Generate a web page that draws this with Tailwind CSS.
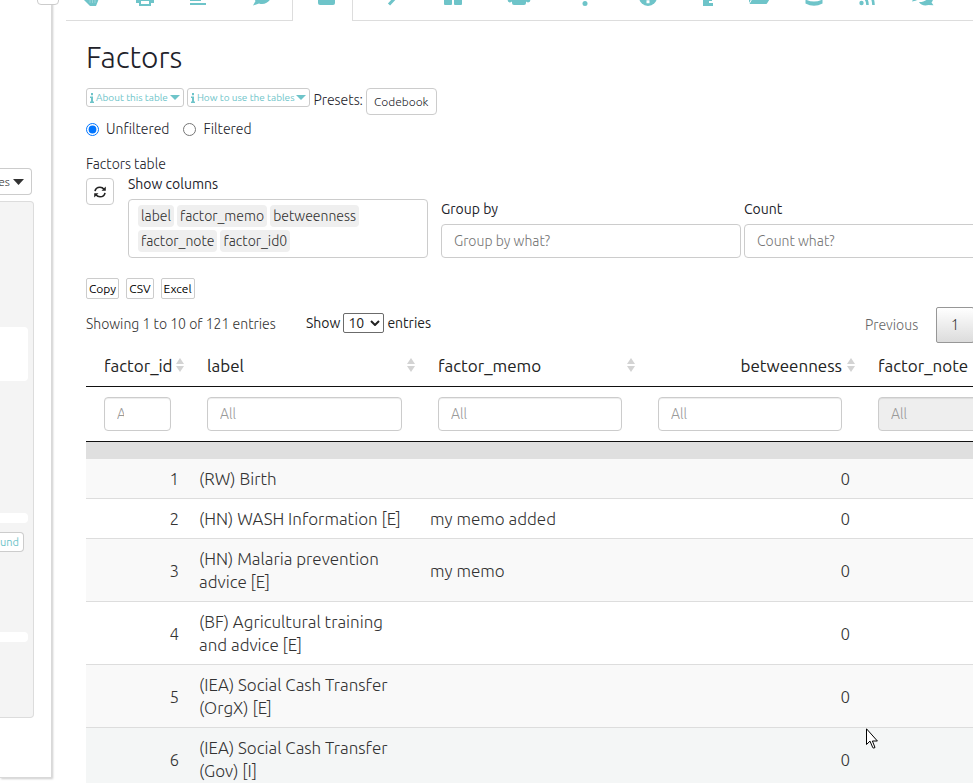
<!DOCTYPE html>
<html lang="en">
<head>
<meta charset="utf-8">
<meta name="viewport" content="width=device-width, initial-scale=1">
<title>Factors</title>
<script src="https://cdn.jsdelivr.net/npm/@tailwindcss/browser@4"></script>
</head>
<body class="relative flex min-h-screen overflow-hidden bg-white font-['Ubuntu','Open_Sans',sans-serif] text-[14px] leading-5 font-light text-[#212129]">

<!-- Sidebar -->
<aside class="relative h-[778px] w-[52px] shrink-0 border-r border-b border-[#d9d9d9] shadow-[1px_1px_2px_#ccc]" aria-label="Options">
  <button aria-label="Collapse" class="absolute -right-2 -top-4 h-[21px] w-[22px] rounded border border-[#ccc] bg-white"></button>
  <div class="flex flex-col items-start pt-[168px]">
    <button class="flex h-[27px] w-8 items-center justify-end gap-[3px] rounded-r border border-l-0 border-[#ccc] pr-[7px] text-[12px] text-[#333]">es
      <svg class="h-[6px] w-[11px] shrink-0" viewBox="0 0 11 6"><path d="M0 0h11L5.500 6z" fill="#333"/></svg>
    </button>
    <div class="mt-[6px] h-[517px] w-[34px] rounded-r border border-l-0 border-[#dcdcdc] bg-[#f4f4f4]">
      <div class="mt-[125px] h-[54px] w-7 rounded-r bg-white"></div>
      <div class="mt-[132px] h-[10px] w-7 rounded-r bg-white"></div>
      <button class="mt-[9px] flex h-5 w-6 items-center justify-end rounded-r border border-l-0 border-[#ccc] bg-white pr-1 text-[11px] font-normal text-[#6ec4c9]">und</button>
      <div class="mt-[80px] h-[10px] w-7 rounded-r bg-white"></div>
    </div>
  </div>
</aside>

<main class="ml-[14px] min-w-0 flex-1">
  <!-- Tabs -->
  <nav class="flex h-[21px] overflow-hidden text-[#6ec4c9] *:flex *:h-[21px] *:shrink-0 *:justify-center *:border-b *:border-[#ddd]" aria-label="Sections">
    <a href="#" aria-label="Hand" class="w-[52px]"><svg class="-mt-[12px] h-[18px] w-5" viewBox="0 0 20 18" fill="currentColor"><path d="M1 3h17v4l-2 6-2 5H8l-6-6z"/><path d="M8 12v3M10.500 12v3M13 12v3" stroke="#fff" stroke-opacity=".3"/></svg></a>
    <a href="#" aria-label="Print" class="w-[53px]"><svg class="-mt-[12px] h-[18px] w-5" viewBox="0 0 20 18" fill="currentColor"><path fill-rule="evenodd" d="M4 1h12v6h2q1 0 1 1v7h-3v3H4v-3H1V8q0-1 1-1h2zM6 3v5h8V3zM6 13v3h8v-3z"/></svg></a>
    <a href="#" aria-label="Text" class="w-[54px]"><svg class="-mt-[12px] h-[18px] w-5" viewBox="0 0 20 18" fill="currentColor"><path d="M2 3h14v2H2zM2 7h11v2H2zM2 11h11v2H2zM2 15h16v2H2z"/></svg></a>
    <a href="#" aria-label="Comment" class="w-[67px] pl-[6px]"><svg class="-mt-[12px] h-[18px] w-5" viewBox="0 0 20 18" fill="currentColor"><path d="M10 2c5 0 9 3 9 6.500S15 16 10 16c-1 0-2 0-3-.5L1 17.500l2.500-4.500C0 8 3 2 10 2z"/></svg></a>
    <a href="#" aria-label="Factors" aria-current="page" class="w-[61px] border-x !border-b-0 pl-[6px]"><svg class="-mt-[12px] h-[18px] w-5" viewBox="0 0 20 18" fill="currentColor"><rect x="2" y="1" width="17" height="16" rx="2"/></svg></a>
    <a href="#" aria-label="Links" class="w-[79px]"><svg class="-mt-[12px] h-[18px] w-5" viewBox="0 0 20 18"><path d="M6 2l7 7-7 7.500" fill="none" stroke="currentColor" stroke-width="3"/></svg></a>
    <a href="#" aria-label="Grid" class="w-[42px]"><svg class="-mt-[12px] h-[18px] w-5" viewBox="0 0 20 18" fill="currentColor"><rect x="1" width="8" height="8" rx="1"/><rect x="11" width="8" height="8" rx="1"/><rect x="1" y="9" width="8" height="8" rx="1"/><rect x="11" y="9" width="8" height="8" rx="1"/></svg></a>
    <a href="#" aria-label="Users" class="w-[90px]"><svg class="-mt-[12px] h-[18px] w-6" viewBox="0 0 24 18" fill="currentColor"><circle cx="12" cy="5" r="4"/><path d="M5 15v-2q0-4 4-4h6q4 0 4 4v2q0 2-2 2H7q-2 0-2-2z"/><circle cx="3" cy="12" r="2.400"/><circle cx="21" cy="12" r="2.400"/></svg></a>
    <a href="#" aria-label="Alerts" class="w-[42px]"><svg class="-mt-[12px] h-[18px] w-5" viewBox="0 0 20 18" fill="currentColor"><path d="M8 0h4l-1 10H9z"/><circle cx="10" cy="15.500" r="2.500"/></svg></a>
    <a href="#" aria-label="Help" class="w-[84px]"><svg class="-mt-[12px] h-[18px] w-5" viewBox="0 0 20 18" fill="currentColor"><circle cx="10" cy="9" r="9"/><path d="M8.700 4h2.600v6H8.700zM8.500 12.200h3v3h-3z" fill="#fff"/></svg></a>
    <a href="#" aria-label="Document" class="w-9"><svg class="-mt-[12px] h-[18px] w-5" viewBox="0 0 20 18"><path d="M5 1h10v3h-1v9h-3v2h4v3H5z" fill="currentColor"/></svg></a>
    <a href="#" aria-label="Folder" class="w-[68px]"><svg class="-mt-[12px] h-[18px] w-6" viewBox="0 0 24 18" fill="currentColor"><path d="M1 3h7l2 2h9v3H5l-4 7zM5.500 9H23l-4 6.500q-.5.500-1.500.5H1.500z"/></svg></a>
    <a href="#" aria-label="Database" class="w-10"><svg class="-mt-[12px] h-[18px] w-5" viewBox="0 0 20 18" fill="currentColor"><ellipse cx="10" cy="3" rx="8.500" ry="3"/><path d="M1.500 5q8.500 4 17 0v4q-8.500 4-17 0zM1.500 11.500q8.500 4 17 0v4q-8.500 4.500-17 0z"/></svg></a>
    <a href="#" aria-label="Feed" class="w-[66px]"><svg class="-mt-[12px] h-[18px] w-5" viewBox="0 0 20 18"><circle cx="4.500" cy="15" r="2.200" fill="currentColor"/><path d="M2 8.500q8.500 0 8.500 8.500M2 3q14 0 14.500 14" fill="none" stroke="currentColor" stroke-width="2.600"/></svg></a>
    <a href="#" aria-label="Discussion" class="w-[46px]"><svg class="-mt-[12px] h-[18px] w-6" viewBox="0 0 24 18" fill="currentColor"><path d="M9 1c5 0 8 3 8 5.500S14 12 9 12c-2 0-3 0-4.500.8L1 13.500l1.500-3C-1 6 3 1 9 1z"/><path d="M18.500 6c4 2 4.500 6 2 8.500l2 2.800-5-.3c-4 1.200-8 0-9.500-3 6 .2 10-2.800 10.500-8z"/></svg></a>
    <span class="min-w-0 flex-1"></span>
  </nav>

  <div class="pl-5">
    <h1 class="mt-[19px] text-[30px] leading-[34px]">Factors</h1>

    <div class="mt-[14px] flex gap-[3px]">
      <button class="flex h-[19px] items-center gap-[2px] rounded-[3px] border border-[#ccc] px-[3px] text-[10px] font-normal text-[#6ec4c9]">
        <svg class="h-[10px] w-1" viewBox="0 0 4 10" fill="currentColor"><path d="M1 0h2v2.200H1zM0 3.500h3V8.500h1V10H0V8.500h1V5H0z"/></svg>
        <span>About this table</span>
        <svg class="h-[5px] w-[10px]" viewBox="0 0 10 5" fill="currentColor"><path d="M0 0h10L5 5z"/></svg>
      </button>
      <button class="flex h-[19px] items-center gap-[2px] rounded-[3px] border border-[#ccc] px-[3px] text-[10px] font-normal text-[#6ec4c9]">
        <svg class="h-[10px] w-1" viewBox="0 0 4 10" fill="currentColor"><path d="M1 0h2v2.200H1zM0 3.500h3V8.500h1V10H0V8.500h1V5H0z"/></svg>
        <span>How to use the tables</span>
        <svg class="h-[5px] w-[10px]" viewBox="0 0 10 5" fill="currentColor"><path d="M0 0h10L5 5z"/></svg>
      </button>
      <span class="pt-[2px]">Presets:</span>
      <button class="h-[27px] rounded border border-[#ccc] px-[7px] text-[12px]">Codebook</button>
    </div>

    <div class="mt-1 flex h-5 items-center">
      <label class="flex items-center gap-[7px]"><input type="radio" name="filter" checked class="size-[13px]">Unfiltered</label>
      <label class="ml-[14px] flex items-center gap-[7px]"><input type="radio" name="filter" class="size-[13px]">Filtered</label>
    </div>

    <h2 class="mt-[15px]">Factors table</h2>

    <div class="flex items-start">
      <button aria-label="Refresh" class="mt-1 flex h-[27px] w-7 shrink-0 items-center justify-center rounded border border-[#ccc]">
        <svg class="size-3" viewBox="0 0 12 12" fill="none" stroke="#222" stroke-width="1.600"><path d="M1 5.200C1.500 2.500 3.800 1.200 6 1.200c1.700 0 3 .7 4 2M11 6.800c-.5 2.700-2.800 4-5 4-1.700 0-3-.7-4-2"/><path d="M11.800.5v4.300H7.500zM.2 11.500V7.200h4.300z" fill="#222" stroke="none"/></svg>
      </button>
      <div class="ml-[14px] w-[300px] shrink-0">
        <div id="cols" class="font-normal">Show columns</div>
        <div role="group" aria-labelledby="cols" class="mt-[5px] flex h-[59px] flex-wrap content-start gap-[3px] rounded border border-[#ccc] py-[5px] pl-[9px] text-[#303030] *:h-[22px] *:rounded *:bg-[#efefef] *:px-[3px] *:leading-[22px]">
          <span>label</span><span>factor_memo</span><span>betweenness</span><span>factor_note</span><span>factor_id0</span>
        </div>
      </div>
      <div class="ml-[13px] w-[300px] shrink-0 pt-[25px]">
        <label for="group" class="block font-normal">Group by</label>
        <input id="group" placeholder="Group by what?" class="mt-[5px] block h-[34px] w-full rounded border border-[#ccc] px-3 placeholder:text-[#757575]">
      </div>
      <div class="ml-[3px] w-[300px] shrink-0 pt-[25px]">
        <label for="count" class="block font-normal">Count</label>
        <input id="count" placeholder="Count what?" class="mt-[5px] block h-[34px] w-full rounded border border-[#ccc] px-3 placeholder:text-[#757575]">
      </div>
    </div>

    <div class="mt-5 flex gap-[7px] *:h-[21px] *:rounded-xs *:border *:border-[#ccc] *:px-[2px] *:text-[12px] *:leading-[19px] *:font-normal *:text-black">
      <button>Copy</button><button>CSV</button><button>Excel</button>
    </div>

    <div class="mt-2 flex h-9 w-[994px] items-start">
      <div class="w-[220px] pt-[7px] text-[#333]" role="status">Showing 1 to 10 of 121 entries</div>
      <label class="flex items-center gap-[3px] pt-[6px] font-normal text-[#222]">Show
        <span class="relative flex items-center">
          <select class="h-5 w-[41px] appearance-none rounded-xs border border-[#6b6b6b] bg-white pl-1 leading-[18px]"><option>10</option><option>25</option><option>50</option></select>
          <svg class="pointer-events-none absolute right-1 h-[6px] w-[10px]" viewBox="0 0 10 6" fill="none" stroke="#222" stroke-width="2"><path d="M1 1l4 4 4-4"/></svg>
        </span>entries</label>
      <div class="ml-auto flex w-[227px] items-start">
        <button class="mt-2 w-[83px] pl-3 text-left text-[#666]">Previous</button>
        <button aria-current="page" class="h-9 w-[38px] rounded-xs border border-[#979797] bg-linear-to-b from-white to-[#dcdcdc] text-[#333]">1</button>
      </div>
    </div>

    <table class="w-[994px] table-fixed border-separate border-spacing-0 text-[17px] leading-[23px] text-[#333]">
      <colgroup><col class="w-[103px]"><col class="w-[231px]"><col class="w-[220px]"><col class="w-[220px]"><col class="w-[220px]"></colgroup>
      <thead>
        <tr class="text-left *:relative *:h-11 *:border-b *:border-[#111] *:px-[18px] *:pt-[2px] *:font-normal *:text-[#222]">
          <th>factor_id<svg class="absolute right-[5px] top-[15px] h-[14px] w-2" viewBox="0 0 8 14" fill="#d3d3d3"><path d="M0 6l4-6 4 6zM0 8l4 6 4-6z"/></svg></th>
          <th>label<svg class="absolute right-[5px] top-[15px] h-[14px] w-2" viewBox="0 0 8 14" fill="#d3d3d3"><path d="M0 6l4-6 4 6zM0 8l4 6 4-6z"/></svg></th>
          <th>factor_memo<svg class="absolute right-[5px] top-[15px] h-[14px] w-2" viewBox="0 0 8 14" fill="#d3d3d3"><path d="M0 6l4-6 4 6zM0 8l4 6 4-6z"/></svg></th>
          <th class="text-right">betweenness<svg class="absolute right-[5px] top-[15px] h-[14px] w-2" viewBox="0 0 8 14" fill="#d3d3d3"><path d="M0 6l4-6 4 6zM0 8l4 6 4-6z"/></svg></th>
          <th>factor_note</th>
        </tr>
        <tr class="*:h-[55px] *:border-b *:border-[#111] *:px-[18px] *:text-[14px] *:font-light">
          <td><input aria-label="Filter factor_id" placeholder="All" class="block h-[34px] w-full rounded border border-[#ccc] pr-[46px] pl-3 shadow-[inset_0_1px_1px_rgba(0,0,0,0.075)] placeholder:text-[#999]"></td>
          <td><input aria-label="Filter label" placeholder="All" class="block h-[34px] w-full rounded border border-[#ccc] px-3 shadow-[inset_0_1px_1px_rgba(0,0,0,0.075)] placeholder:text-[#999]"></td>
          <td><input aria-label="Filter factor_memo" placeholder="All" class="block h-[34px] w-full rounded border border-[#ccc] px-3 shadow-[inset_0_1px_1px_rgba(0,0,0,0.075)] placeholder:text-[#999]"></td>
          <td><input aria-label="Filter betweenness" placeholder="All" class="block h-[34px] w-full rounded border border-[#ccc] px-3 shadow-[inset_0_1px_1px_rgba(0,0,0,0.075)] placeholder:text-[#999]"></td>
          <td><input aria-label="Filter factor_note" placeholder="All" disabled class="block h-[34px] w-full rounded border border-[#ccc] bg-[#eee] px-3 shadow-[inset_0_1px_1px_rgba(0,0,0,0.075)] placeholder:text-[#999]"></td>
        </tr>
      </thead>
      <tbody class="[&_td]:border-b [&_td]:border-[#ddd] [&_td]:px-[10px] [&_td]:py-2">
        <tr class="h-[17px] bg-[#dfdfdf]"><td colspan="5" class="h-[17px] !border-0 !p-0"></td></tr>
        <tr class="bg-[#f9f9f9]"><td class="text-right">1</td><td>(RW) Birth</td><td></td><td class="text-right">0</td><td></td></tr>
        <tr><td class="text-right">2</td><td>(HN) WASH Information [E]</td><td>my memo added</td><td class="text-right">0</td><td></td></tr>
        <tr class="bg-[#f9f9f9]"><td class="text-right">3</td><td>(HN) Malaria prevention advice [E]</td><td>my memo</td><td class="text-right">0</td><td></td></tr>
        <tr><td class="text-right">4</td><td>(BF) Agricultural training and advice [E]</td><td></td><td class="text-right">0</td><td></td></tr>
        <tr class="bg-[#f9f9f9]"><td class="text-right">5</td><td>(IEA) Social Cash Transfer (OrgX) [E]</td><td></td><td class="text-right">0</td><td></td></tr>
        <tr class="bg-[#f4f6f6]"><td class="text-right">6</td><td>(IEA) Social Cash Transfer (Gov) [I]</td><td></td><td class="text-right">0</td><td></td></tr>
      </tbody>
    </table>
  </div>
</main>

<!-- Pointer -->
<svg class="pointer-events-none absolute left-[866px] top-[728px] h-[21px] w-3" viewBox="0 0 12 21" fill="#fff" stroke="#000"><path d="M.5.800v15.700l3.500-3.400 2.800 6.600q1 .8 2.200-.2l-2.600-6.500h5z"/></svg>
</body>
</html>
